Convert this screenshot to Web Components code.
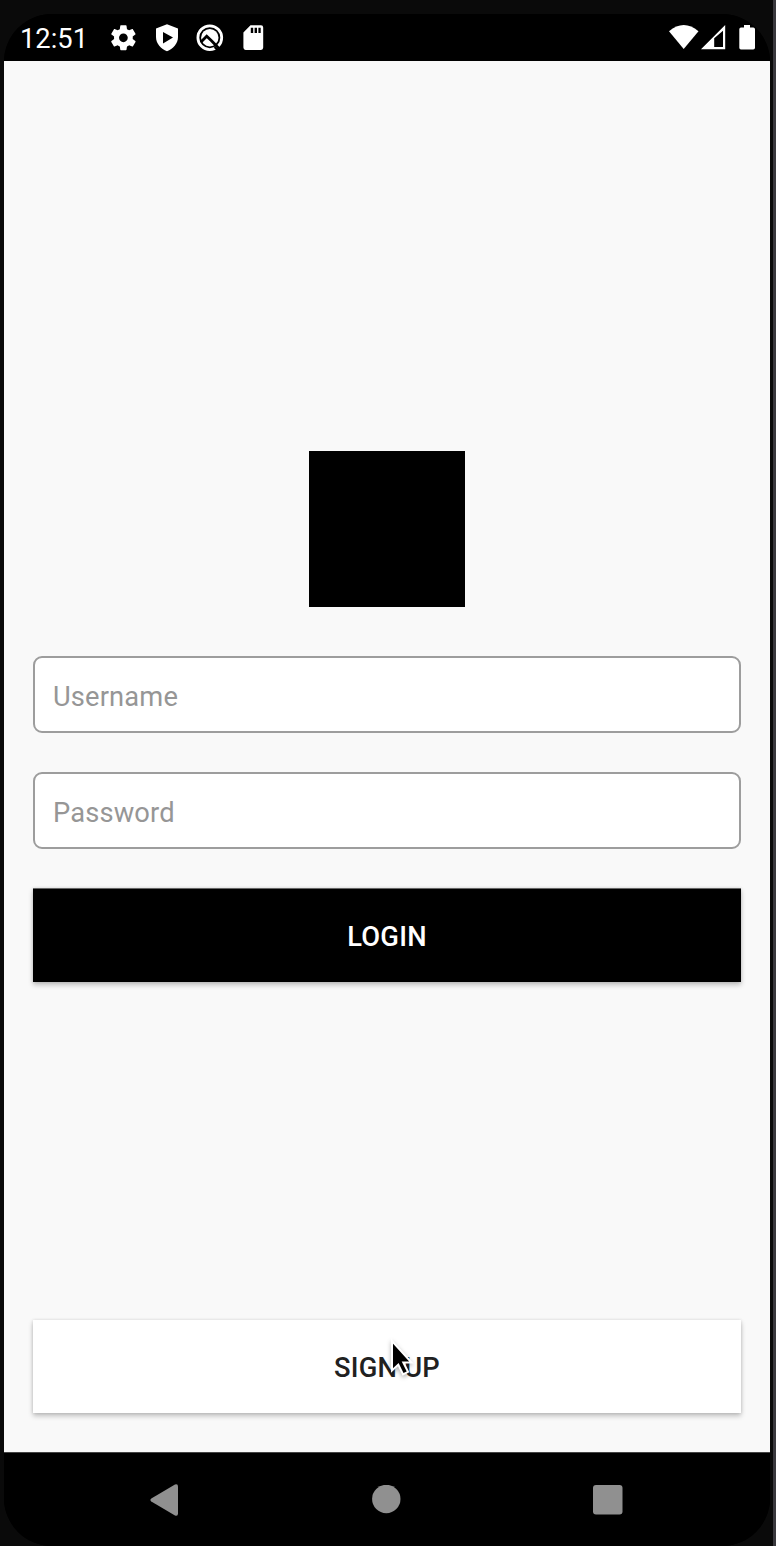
<!DOCTYPE html>
<html lang="en"><head><meta charset="utf-8"><title>Login</title>
<style>html,body{margin:0;height:100%;overflow:hidden;background:#0a0a0a}body{font-family:Roboto,sans-serif}</style></head>
<body>
<phone-frame>
  <status-bar slot="top" time="12:51"></status-bar>
  <login-screen></login-screen>
  <nav-bar slot="bottom"></nav-bar>
</phone-frame>
<script>
const define = (name, html, setup) => customElements.define(name, class extends HTMLElement {
  constructor() {
    super();
    const t = document.createElement('template');
    t.innerHTML = html;
    this.attachShadow({ mode: 'open' }).append(t.content.cloneNode(true));
  }
  connectedCallback() { if (setup) setup(this, this.shadowRoot); }
});

define('phone-frame', `
<style>
:host{display:block;box-sizing:border-box;width:776px;height:1546px;padding:14px 3px 0 4px;background:#0a0a0a;border-right:3px solid #39383d}
main{display:flex;flex-direction:column;width:766px;height:1532px;border-radius:48px;background:#000;overflow:hidden}
</style>
<main><slot name="top"></slot><slot></slot><slot name="bottom"></slot></main>`);

define('status-bar', `
<style>
:host{display:flex;flex:none;box-sizing:border-box;height:47px;padding:0 14px 0 16px;justify-content:space-between;color:#fff;background:#000}
div{display:flex;align-items:center}
span{font-size:27.3px;line-height:32px;width:88px;white-space:nowrap;padding-top:2px}
svg{display:block;fill:#fff;flex:none}
</style>
<div><span></span>
<svg width="30" height="47" viewBox="0 0 30 47"><path transform="translate(.4 8.8) scale(1.25)" d="M19.430 12.980c.04-.32.07-.64.07-.98s-.03-.66-.07-.98l2.110-1.650c.19-.15.24-.42.12-.64l-2-3.460c-.12-.22-.39-.3-.61-.22l-2.490 1c-.52-.4-1.080-.73-1.690-.98l-.38-2.650A.49.49 0 0 0 14 2h-4c-.25 0-.46.18-.49.42l-.38 2.650c-.61.25-1.170.59-1.690.98l-2.490-1c-.23-.09-.49 0-.61.22l-2 3.460c-.13.22-.07.49.12.64l2.110 1.650c-.04.32-.07.65-.07.98s.03.66.07.98l-2.110 1.650c-.19.15-.24.42-.12.64l2 3.460c.12.22.39.3.61.22l2.490-1c.52.4 1.080.73 1.690.98l.38 2.650c.03.24.24.42.49.42h4c.25 0 .46-.18.49-.42l.38-2.650c.61-.25 1.170-.59 1.690-.98l2.490 1c.23.09.49 0 .61-.22l2-3.460c.12-.22.07-.49-.12-.64l-2.110-1.650zM12 15.500c-1.930 0-3.500-1.570-3.500-3.500s1.570-3.500 3.500-3.500 3.500 1.570 3.500 3.500-1.570 3.500-3.500 3.500z"/></svg>
<svg width="135" height="47" viewBox="138 14 135 47">
<path fill-rule="evenodd" d="M167 24.200L178 28.500V37C178 43.500 173 49 167 51.200C161 49 156 43.500 156 37V28.500ZM163 32V43.500L173 37.600Z"/>
<circle cx="209.800" cy="37.700" r="11.900" fill="none" stroke="#fff" stroke-width="2.800"/>
<circle cx="209.800" cy="37.700" r="8.700"/>
<path d="M201 42L206.700 36.300L211.500 40.800L219 48.500" fill="none" stroke="#000" stroke-width="2.800"/>
<path d="M214.500 47L218.500 51" fill="none" stroke="#000" stroke-width="2"/>
<path fill-rule="evenodd" d="M250.500 25.300H261Q263.200 25.300 263.200 27.500V47.600Q263.200 49.900 261 49.900H245.600Q243.400 49.900 243.400 47.600V32.600ZM250.800 27.800V32.900H253.200V27.800ZM254.600 27.800V32.900H257V27.800ZM258.400 27.800V32.900H260.700V27.800Z"/>
</svg></div>
<div><svg width="90" height="47" viewBox="666 14 90 47">
<path d="M683.700 49L669 31.300Q683.700 18.700 698.500 31.300Z"/>
<path fill-rule="evenodd" d="M701 49.200L725.200 25V49.200ZM714.200 38.300V46.900H723V30.800Z"/>
<path d="M744 25H750V27.500H753.200Q755 27.500 755 29.300V47.800Q755 49.500 753.200 49.500H741Q739.300 49.500 739.300 47.800V29.300Q739.300 27.500 741 27.500H744Z"/>
</svg></div>`, (el, root) => root.querySelector('span').textContent = el.getAttribute('time'));

define('text-field', `
<style>
:host{display:flex;box-sizing:border-box;align-items:center;height:77.300px;border:2px solid #9d9d9d;border-radius:9px;background:#fff;padding:5px 18px 0;color:#969696;font-size:27.300px;letter-spacing:.15px;line-height:32px}
</style><slot></slot>`);

define('action-button', `
<style>
:host{display:flex;box-sizing:border-box;align-items:center;justify-content:center;height:93.400px;padding-top:var(--drop,3px);font-size:27.300px;font-weight:500;letter-spacing:.25px;line-height:32px;background:var(--fill);color:var(--ink);box-shadow:0 3px 5px rgba(0,0,0,.23),0 0 3px rgba(0,0,0,.12)}
</style><slot></slot>`);

define('mouse-pointer', `
<style>:host{display:block;width:26px;height:42px;filter:drop-shadow(0 2px 2px rgba(0,0,0,.3))}svg{display:block}</style>
<svg width="26" height="42" viewBox="388 1338 26 42"><path d="M392 1341V1370.500L398.300 1364.600L403 1374.300L408 1371.800L403.300 1362.500H411.500Z" fill="#000" stroke="#fff" stroke-width="2"/></svg>`);

define('login-screen', `
<style>
:host{display:flex;flex:none;box-sizing:border-box;flex-direction:column;height:1391px;padding:390px 29px 39px;background:#f9f9f9}
.logo{width:156px;height:156px;background:#000;align-self:center;margin-bottom:49px;flex:none}
form{display:flex;flex-direction:column;gap:38.800px}
footer{position:relative;margin-top:auto}
mouse-pointer{position:absolute;left:355px;top:18px}
</style>
<div class="logo"></div>
<form><text-field>Username</text-field><text-field>Password</text-field>
<action-button style="--fill:linear-gradient(#666 1px,#000 1px);--ink:#fff;--drop:5px">LOGIN</action-button></form>
<footer><action-button style="--fill:#fff;--ink:#212121">SIGN UP</action-button><mouse-pointer></mouse-pointer></footer>`);

define('nav-bar', `
<style>
:host{display:flex;flex:none;box-sizing:border-box;height:94px;padding:0 147px 0 146px;align-items:center;justify-content:space-between;background:#000;border-top:1px solid #444}
svg{display:block;fill:#909090}
</style>
<svg width="28" height="32" viewBox="0 0 28 32"><path d="M1.300 14.500L25 .500Q28 -.500 28 2.500V29.500Q28 32.500 25 31.500L1.300 17.500Q-.500 16 1.300 14.500Z"/></svg>
<svg width="31" height="29" viewBox="0 0 31 29"><circle cx="16.300" cy="14" r="14.200"/></svg>
<svg width="30" height="30" viewBox="0 0 30 30"><rect width="29.500" height="29.500" rx="3"/></svg>`);
</script>
</body></html>
